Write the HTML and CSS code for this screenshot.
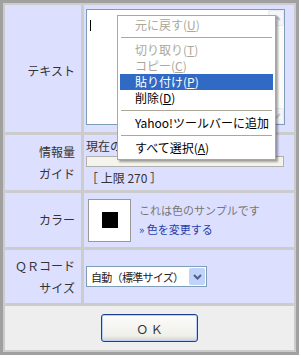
FILE: index.html
```html
<!DOCTYPE html>
<html lang="ja">
<head>
    <meta charset="UTF-8">
    <title>QRコード作成</title>
    <link rel="stylesheet" href="styles.css">
</head>
<body>
    <div class="frame">
        <div class="label row1">テキスト</div>
        <div class="value row1">
            <div class="textbox">
                <span class="caret"></span>
                <div class="scroll">
                    <span class="arrow up"><svg width="9" height="6" viewBox="0 0 9 6"><path d="M1 5 L4.5 1.5 L8 5" fill="none" stroke="#c8ccd8" stroke-width="2"/></svg></span>
                    <span class="arrow down"><svg width="9" height="6" viewBox="0 0 9 6"><path d="M1 1 L4.5 4.5 L8 1" fill="none" stroke="#c8ccd8" stroke-width="2"/></svg></span>
                </div>
            </div>
        </div>

        <div class="label">情報量<br>ガイド</div>
        <div class="value guide">
            <div>現在の情報量</div>
            <div class="meter"></div>
            <div>［ 上限 270 ］</div>
        </div>

        <div class="label">カラー</div>
        <div class="value color">
            <div class="swatch"><span></span></div>
            <div class="swatch-text">
                <div class="note">これは色のサンプルです</div>
                <a class="change">» 色を変更する</a>
            </div>
        </div>

        <div class="label">ＱＲコード<br>サイズ</div>
        <div class="value size">
            <div class="select">
                <span class="choice">自動（標準サイズ）</span>
                <span class="drop"><svg width="9" height="6" viewBox="0 0 9 6"><path d="M1 1 L4.5 4.5 L8 1" fill="none" stroke="#4d6185" stroke-width="2"/></svg></span>
            </div>
        </div>

        <div class="footer">
            <button class="ok">Ｏ Ｋ</button>
        </div>
    </div>

    <!-- context menu over the textarea -->
    <div class="menu">
        <div class="item off">元に戻す(<u>U</u>)</div>
        <div class="sep"></div>
        <div class="item off">切り取り(<u>T</u>)</div>
        <div class="item off">コピー(<u>C</u>)</div>
        <div class="item on">貼り付け(<u>P</u>)</div>
        <div class="item">削除(<u>D</u>)</div>
        <div class="sep"></div>
        <div class="item">Yahoo!ツールバーに追加</div>
        <div class="sep"></div>
        <div class="item">すべて選択(<u>A</u>)</div>
    </div>
</body>
</html>
```

FILE: styles.css
```css
body {
    margin: 0;
    background-color: #fff;
    font-family: "Noto Sans CJK JP", "DejaVu Sans", sans-serif;
    font-size: 12px;
    color: #333;
}
.frame {
    width: 289px;
    display: grid;
    grid-template-columns: 76px 210px;
    grid-template-rows: 127px 55px 54px 53px 44px;
    gap: 3px;
    padding: 2px;
    background-color: #cccccc;
    border: 3px solid #a0a0a0;
}
.label {
    background-color: #dddfff;
    display: flex;
    align-items: center;
    justify-content: flex-end;
    text-align: right;
    padding-right: 6px;
    line-height: 22px;
}
.value {
    background-color: #dddfff;
    padding-left: 2px;
}
.row1 {
    padding-top: 4px;
}
.textbox {
    position: relative;
    width: 197px;
    height: 114px;
    background-color: #fff;
    border: 1px solid #7f9db9;
}
.caret {
    position: absolute;
    left: 3px;
    top: 10px;
    width: 1px;
    height: 11px;
    background-color: #000;
}
.scroll {
    position: absolute;
    right: 0;
    top: 0;
    bottom: 0;
    width: 16px;
    background-color: #fbfbf9;
    display: flex;
    flex-direction: column;
    justify-content: space-between;
}
.arrow {
    height: 16px;
    border: 1px solid #e8ebf2;
    border-radius: 2px;
    background-color: #f4f5f8;
    display: flex;
    align-items: center;
    justify-content: center;
    box-sizing: border-box;
}
.guide {
    padding-top: 3px;
    line-height: 16px;
}
.meter {
    width: 196px;
    height: 9px;
    margin: 2px 0 3px 0;
    background-color: #f4f4ec;
    border: 1px solid #b0b0b0;
}
.color {
    display: flex;
    align-items: center;
    gap: 8px;
    padding-left: 4px;
}
.swatch {
    width: 41px;
    height: 41px;
    background-color: #fff;
    border: 1px solid #999;
    display: flex;
    align-items: center;
    justify-content: center;
}
.swatch span {
    width: 16px;
    height: 16px;
    background-color: #000;
}
.swatch-text {
    font-size: 11px;
    line-height: 19px;
}
.note {
    color: #777;
}
.change {
    color: #1f3fa8;
    text-decoration: none;
}
.size {
    display: flex;
    align-items: center;
}
.select {
    width: 121px;
    height: 21px;
    box-sizing: border-box;
    border: 1px solid #7f9db9;
    background-color: #fff;
    display: flex;
    align-items: center;
    justify-content: space-between;
    padding-left: 4px;
    color: #222;
}
.choice {
    white-space: nowrap;
    font-size: 11px;
    letter-spacing: -0.7px;
}
.drop {
    width: 16px;
    height: 17px;
    margin-right: 1px;
    background-color: #c1d3fb;
    border-radius: 2px;
    display: flex;
    align-items: center;
    justify-content: center;
}
.footer {
    grid-column: 1 / 3;
    background-color: #eeeeee;
    display: flex;
    justify-content: center;
    align-items: center;
}
.ok {
    width: 97px;
    height: 28px;
    font-family: inherit;
    font-size: 12px;
    color: #333;
    background: linear-gradient(#fcfcfb, #f0f0ea 80%, #d6d0c5);
    border: 1px solid #1d3f8f;
    border-radius: 3px;
    box-shadow: inset 0 0 0 1px #b9cdf6;
}
.menu {
    position: absolute;
    left: 117px;
    top: 15px;
    width: 153px;
    padding: 1px 2px 3px 2px;
    background-color: #fff;
    border: 1px solid #aca899;
    box-shadow: 2px 2px 2px rgba(0, 0, 0, 0.35);
    color: #000;
    font-size: 12px;
}
.item {
    height: 16px;
    line-height: 16px;
    padding-left: 15px;
}
.item.off {
    color: #aca899;
}
.item.on {
    background-color: #316ac5;
    color: #fff;
}
.sep {
    height: 1px;
    background-color: #aca899;
    margin: 4px 1px;
}
```
